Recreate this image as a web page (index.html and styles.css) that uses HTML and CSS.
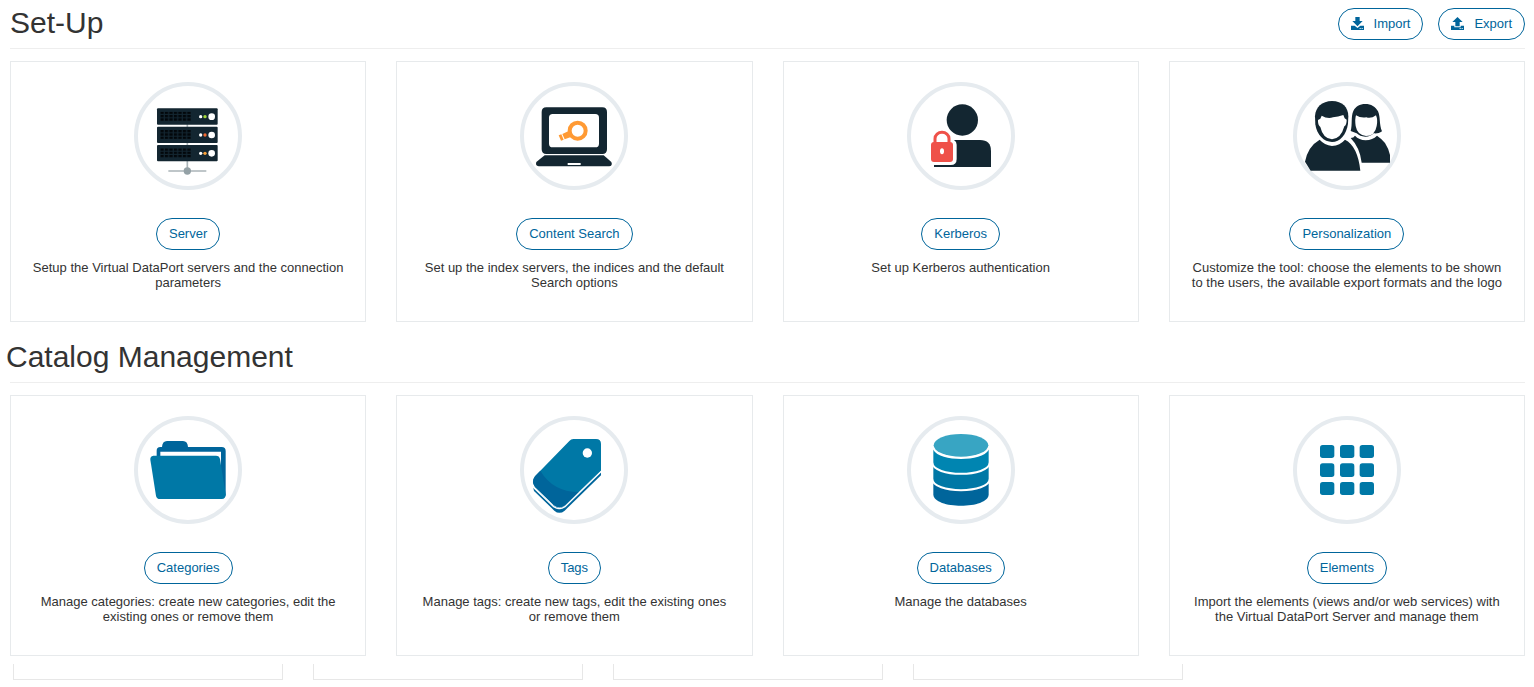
FILE: index.html
```html
<!DOCTYPE html>
<html lang="en">
<head>
<meta charset="utf-8">
<title>Set-Up</title>
<link rel="stylesheet" href="styles.css">
</head>
<body>
<main class="page">
  <section class="section">
    <header class="section-header">
      <h2 class="section-title">Set-Up</h2>
      <div class="actions">
        <button type="button" class="pill"><svg class="pill-icon" viewBox="0 0 39 39" aria-hidden="true"><path fill="currentColor" d="M13 0h13v12h9L19.500 28 4 12h9zM0 26h11l8.500 7 8.500-7h11v13H0z"/><path fill="#fff" d="M26 33h3v3h-3zM32 33h3v3h-3z"/></svg>Import</button>
        <button type="button" class="pill"><svg class="pill-icon" viewBox="0 0 39 39" aria-hidden="true"><path fill="currentColor" d="M19.500 0L35 15h-9v13H13V15H4zM0 26h10v5h19v-5h10v13H0z"/><path fill="#fff" d="M26 33h3v3h-3zM32 33h3v3h-3z"/></svg>Export</button>
      </div>
    </header>
    <div class="cards">
      <article class="card">
        <svg class="badge" viewBox="30 18 324 324" aria-hidden="true">
          <defs>
            <pattern id="vents" x="109" y="0" width="13.500" height="10" patternUnits="userSpaceOnUse"><rect width="10" height="7" fill="#02070b"/></pattern>
            <g id="rack">
              <rect x="99" y="0" width="182" height="49" rx="3" fill="#132631"/>
              <g transform="translate(0 10)"><rect x="109" y="0" width="92" height="28" fill="url(#vents)"/></g>
              <circle cx="230" cy="25" r="5" fill="#fff"/>
              <circle cx="263" cy="25" r="10" fill="#fff"/>
            </g>
          </defs>
          <circle class="ring" cx="192" cy="180" r="156"/>
          <path d="M190 140v145M133 285h114" stroke="#aab4b8" stroke-width="5"/>
          <circle cx="190" cy="285" r="11" fill="#94a1a6"/>
          <use href="#rack" y="97"/><use href="#rack" y="152"/><use href="#rack" y="207"/>
          <circle cx="243" cy="122" r="5" fill="#a4d93b"/>
          <circle cx="243" cy="177" r="5" fill="#f36b32"/>
          <circle cx="243" cy="232" r="5" fill="#f9a13a"/>
        </svg>
        <button type="button" class="pill">Server</button>
        <p class="card-text">Setup the Virtual DataPort servers and the connection parameters</p>
      </article>
      <article class="card">
        <svg class="badge" viewBox="30 18 324 324" aria-hidden="true">
          <circle class="ring" cx="192" cy="180" r="156"/>
          <path fill="#132631" fill-rule="evenodd" d="M109 94h168q14 0 14 14v112q0 14-14 14H109q-14 0-14-14V108q0-14 14-14zM128 114q-11 0-11 11v78q0 11 11 11h128q11 0 11-11v-78q0-11-11-11z"/>
          <path fill="#132631" d="M104 238h177l23 20q5 12-7 13H86q-11-2-7-13z"/>
          <rect x="173" y="261" width="39" height="6" fill="#fff"/>
          <circle cx="203" cy="164" r="24" fill="none" stroke="#ff9a34" stroke-width="12"/>
          <path fill="#ff9a34" d="M176 165l9 17-21 8-7-16zM154 175l7 16-8 3-7-16z"/>
        </svg>
        <button type="button" class="pill">Content Search</button>
        <p class="card-text">Set up the index servers, the indices and the default Search options</p>
      </article>
      <article class="card">
        <svg class="badge" viewBox="30 18 324 324" aria-hidden="true">
          <circle class="ring" cx="192" cy="180" r="156"/>
          <circle cx="196" cy="132" r="47" fill="#132631"/>
          <path fill="#132631" d="M111 192h138q33 0 33 33v48H111z"/>
          <path fill="#fff" d="M98 192h73q8 5 8 14v43q0 18-18 18H98z"/>
          <path d="M115 204v-16a20 20 0 0 1 40 0v16" fill="none" stroke="#fff" stroke-width="22"/>
          <path d="M114 204v-16a21 19 0 0 1 42 0v16" fill="none" stroke="#ef5149" stroke-width="9"/>
          <rect x="102" y="198" width="66" height="60" rx="9" fill="#ef5149"/>
          <ellipse cx="135" cy="226" rx="6" ry="9" fill="#fff"/>
        </svg>
        <button type="button" class="pill">Kerberos</button>
        <p class="card-text">Set up Kerberos authentication</p>
      </article>
      <article class="card">
        <svg class="badge" viewBox="30 18 324 324" aria-hidden="true">
          <circle class="ring" cx="192" cy="180" r="156"/>
          <g fill="#132631">
            <path d="M203 165c6-20 0-42 8-60 7-14 19-21 36-21s31 8 38 22c8 18 3 39 12 60-8 6-17 7-25 6-7 7-14 10-25 10s-20-4-26-10z"/>
            <path d="M203 186q9 0 13-7 12 13 32 14 21-1 34-14 15 10 24 22 11 17 15 36v23h-85q-5-45-33-74z"/>
          </g>
          <path fill="#fff" d="M219 118q14 9 31 6 14 5 29-6 6 14 2 32-5 30-32 30-26-2-31-30-3-20 1-32z"/>
          <path fill="#fff" d="M147 68c36 0 55 24 55 55v20c-5 42-27 67-55 67s-52-27-58-67v-20c0-31 21-55 58-55z"/>
          <path fill="#132631" d="M147 75c31 0 49 19 49 46l-1 22c-5 33-24 55-48 55s-46-21-50-53l-1-24c1-27 21-46 51-46z"/>
          <path fill="#fff" d="M116 119q17 10 34 5 15-1 31-7l4 10 6 4q0 16-7 20-10 37-37 39-27-2-35-37-8-6-7-21l7-4z"/>
          <path fill="#132631" d="M66 257q9-46 44-66 14 16 37 19 24-2 39-19 38 19 46 93H83z"/>
        </svg>
        <button type="button" class="pill">Personalization</button>
        <p class="card-text">Customize the tool: choose the elements to be shown to the users, the available export formats and the logo</p>
      </article>
    </div>
  </section>

  <section class="section">
    <header class="section-header">
      <h2 class="section-title section-title-outdent">Catalog Management</h2>
    </header>
    <div class="cards">
      <article class="card">
        <svg class="badge" viewBox="30 18 324 324" aria-hidden="true">
          <circle class="ring" cx="192" cy="180" r="156"/>
          <path fill="#00659b" d="M98 140v-18q0-11 11-11h5q1-18 15-18h48q14 0 15 18h101q12 0 12 12v132q0 8-8 10L98 180z"/>
          <path fill="#fff" d="M109 125h182v55l-10-25H109z"/>
          <path fill="#0078a6" d="M88 137h188q10 0 12 10l17 106q0 14-12 14H108q-10 0-12-10L79 149q-1-11 9-12z"/>
        </svg>
        <button type="button" class="pill">Categories</button>
        <p class="card-text">Manage categories: create new categories, edit the existing ones or remove them</p>
      </article>
      <article class="card">
        <svg class="badge" viewBox="30 18 324 324" aria-hidden="true">
          <circle class="ring" cx="192" cy="180" r="156"/>
          <path fill="#00659b" d="M69 230l60 56q19 14 37 0L273 184v12L164 302q-16 13-31 0L72 243z"/>
          <path fill="#0078a6" d="M190 87h68q15 0 15 15v80L165 286q-17 12-33 0l-57-55q-12-16 0-32L178 93q5-6 12-6z"/>
          <path fill="#00659b" d="M91 182q37 63 115 64l-41 40q-17 12-33 0l-57-55q-12-16 0-32z"/>
          <path fill="none" stroke="#fff" stroke-width="4" d="M67 229l64 61q17 12 34 0L275 183"/>
          <circle cx="232" cy="129" r="14" fill="#fff"/>
        </svg>
        <button type="button" class="pill">Tags</button>
        <p class="card-text">Manage tags: create new tags, edit the existing ones or remove them</p>
      </article>
      <article class="card">
        <svg class="badge" viewBox="30 18 324 324" aria-hidden="true">
          <circle class="ring" cx="192" cy="180" r="156"/>
          <path fill="#00659b" d="M109 200h166v53c0 46-166 46-166 0z"/>
          <path fill="#0078a6" stroke="#fff" stroke-width="6" d="M106 150h172v56c0 46-172 46-172 0z"/>
          <path fill="#0085b1" stroke="#fff" stroke-width="6" d="M106 107h172v50c0 46-172 46-172 0z"/>
          <path fill="#fff" d="M103 66h178v46l-6 8c-20 36-146 36-166 0l-6-8z"/>
          <ellipse cx="192" cy="106" rx="82" ry="34" fill="#38a5c3"/>
        </svg>
        <button type="button" class="pill">Databases</button>
        <p class="card-text">Manage the databases</p>
      </article>
      <article class="card">
        <svg class="badge" viewBox="30 18 324 324" aria-hidden="true">
          <circle class="ring" cx="192" cy="180" r="156"/>
          <g fill="#0078a6">
            <rect x="111" y="105" width="43" height="39" rx="8"/><rect x="171" y="105" width="43" height="39" rx="8"/><rect x="230" y="105" width="43" height="39" rx="8"/>
            <rect x="111" y="160" width="43" height="41" rx="8"/><rect x="171" y="160" width="43" height="41" rx="8"/><rect x="230" y="160" width="43" height="41" rx="8"/>
            <rect x="111" y="216" width="43" height="39" rx="8"/><rect x="171" y="216" width="43" height="39" rx="8"/><rect x="230" y="216" width="43" height="39" rx="8"/>
          </g>
        </svg>
        <button type="button" class="pill">Elements</button>
        <p class="card-text">Import the elements (views and/or web services) with the Virtual DataPort Server and manage them</p>
      </article>
    </div>
  </section>

  <div class="stubs">
    <div class="stub"></div>
    <div class="stub"></div>
    <div class="stub"></div>
    <div class="stub"></div>
  </div>
</main>
</body>
</html>
```
FILE: styles.css
```css
* {
  box-sizing: border-box;
}

body {
  margin: 0;
  background: #fff;
  color: #333;
  font: 13px/15px "Liberation Sans", Arial, sans-serif;
}

.page {
  padding: 0 9px 0 10px;
}

.section {
  padding-bottom: 12px;
}

.section-header {
  display: flex;
  align-items: center;
  justify-content: space-between;
  min-height: 49px;
  margin-bottom: 12px;
  border-bottom: 1px solid #eee;
}

.section-title {
  margin: 0;
  padding-bottom: 2px;
  font-size: 30px;
  font-weight: 400;
  line-height: 36px;
}

.section-title-outdent {
  margin-left: -4px;
}

.actions {
  display: flex;
  gap: 15px;
}

.pill {
  display: inline-flex;
  align-items: center;
  gap: 10px;
  height: 32px;
  padding: 0 12px 2px;
  border: 1px solid #00659b;
  border-radius: 16px;
  background: #fff;
  color: #00659b;
  font: inherit;
}

.pill-icon {
  width: 13px;
  height: 13px;
}

.cards {
  display: grid;
  grid-template-columns: repeat(4, 1fr);
  gap: 30px;
}

.card {
  display: flex;
  flex-direction: column;
  align-items: center;
  min-height: 261px;
  padding: 20px;
  border: 1px solid #e7eaec;
  text-align: center;
}

.badge {
  width: 108px;
  height: 108px;
  margin-bottom: 28px;
}

.ring {
  fill: #fff;
  stroke: #e6ebef;
  stroke-width: 12px;
}

.card-text {
  margin: 10px 0 0;
}

.stubs {
  display: grid;
  grid-template-columns: repeat(4, 270px);
  gap: 30px;
  margin: -4px 0 0 3px;
}

.stub {
  height: 16px;
  border: 1px solid #e7e7e7;
  border-top: 0;
}
```
